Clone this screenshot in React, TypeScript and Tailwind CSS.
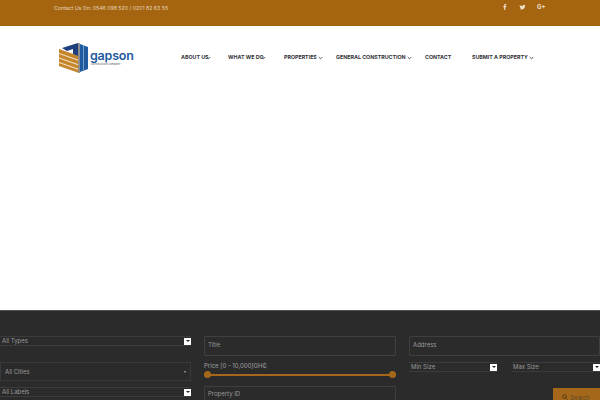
const font = { fontFamily: '"Inter", "Liberation Sans", sans-serif' };

function Nav({ label, caret = "", className = "" }: { label: string; caret?: string; className?: string }) {
  return (
    <div className={`flex items-center text-[5.3px] font-bold text-[#33333a] whitespace-nowrap ${className}`}>
      {label}
      {caret && (
        <svg width="5" height="4" viewBox="0 0 5 4" className={`shrink-0 ${caret}`}>
          <path d="M0.7 1 L2.500 2.800 L4.300 1" fill="none" stroke="#444" strokeWidth="0.9" />
        </svg>
      )}
    </div>
  );
}

function Sel({ label, className = "" }: { label: string; className?: string }) {
  return (
    <div className={`h-[10px] border-y border-[#3c3c3c] flex items-center justify-between text-[6px] leading-[6px] text-[#999] ${className}`}>
      <span className="-mt-[1px]">{label}</span>
      <span className="w-[7px] h-[7px] bg-white flex items-center justify-center">
        <span className="border-x-[2px] border-x-transparent border-t-[2.5px] border-t-[#222]" />
      </span>
    </div>
  );
}

function Field({ label, className = "" }: { label: string; className?: string }) {
  return (
    <div className={`border border-[#3f3f3f] rounded-[1px] flex items-center px-[3px] text-[6px] leading-[6px] text-[#999] ${className}`}>
      <span className="-mt-[2px]">{label}</span>
    </div>
  );
}

export default function App() {
  return (
    <div className="w-[600px] h-[400px] overflow-hidden bg-white flex flex-col" style={font}>
      <div className="h-[26px] bg-[#a5640f] flex justify-between shrink-0">
        <div className="ml-[54px] mt-[4px] text-[5.2px] text-[#e6d6bd] leading-[8px]">Contact Us On: 0546 098 520 / 0201 82 63 55</div>
        <div className="flex mr-[54px] mt-[3px] gap-[11px] text-[#f0e4d0] text-[6px] font-bold leading-[8px]">
          <svg width="6" height="8" viewBox="0 0 6 8">
            <path d="M2.200 7V4.200H1.300V3.100H2.200V2.300C2.200 1.400 2.800 1 3.500 1H4.300V2H3.800C3.400 2 3.300 2.200 3.300 2.500V3.100H4.300L4.100 4.200H3.300V7Z" fill="#f0e4d0" />
          </svg>
          <svg width="7" height="8" viewBox="0 0 8 8">
            <path d="M7.500 2c-.3.1-.5.2-.8.2.3-.2.5-.4.6-.7-.3.2-.6.3-.9.4a1.400 1.400 0 0 0-2.400 1.300C2.800 3.100 1.700 2.600 1 1.700c-.4.700-.2 1.500.4 1.900-.2 0-.4-.1-.6-.2 0 .7.500 1.200 1.100 1.400-.2 0-.4.100-.6 0 .2.600.7 1 1.300 1-.6.500-1.300.700-2.100.6C3.400 7.800 7 6.400 6.800 2.700c.300-.2.500-.4.700-.7z" fill="#f0e4d0" />
          </svg>
          <span className="w-[9px]">G+</span>
        </div>
      </div>
      <div className="h-[84px] shrink-0 flex items-start">
        <div className="ml-[59px] mt-[17px] flex items-center w-[76px]">
          <svg width="30" height="30" viewBox="0 0 30 30" className="shrink-0">
            <path d="M0 6 L20 13 V30 L0 23 Z" fill="#c5852a" />
            <path d="M0 10.500 L20 17.500 M0 15 L20 22 M0 19.500 L20 26.500" stroke="#f3e3c8" strokeWidth="1.100" />
            <path d="M3 5 L19 0 V13 L14 11 V6 L8 8 Z" fill="#1d3f7e" />
            <path d="M19 0 L21 0.300 V30 L19 29.500 Z" fill="#8d8d8d" />
            <path d="M21 1 L29 4 V26 L21 29 Z" fill="#1e5aa0" />
            <path d="M24 2 H25 V27 H24 Z" fill="#ffffff" opacity="0.4" />
          </svg>
          <div className="ml-[1px] flex flex-col -mt-[1px]">
            <span className="text-[12.500px] leading-[11px] pb-[2px] font-semibold text-[#1e5aa0] tracking-[-0.2px]">gapson</span>
            <span className="text-[2.800px] leading-[3px] text-[#555] ml-[1px] whitespace-nowrap">construction company</span>
          </div>
        </div>
        <div className="flex mt-[28px] ml-[46px]">
          <Nav label="ABOUT US" caret="ml-[-3px]" className="w-[47px]" />
          <Nav label="WHAT WE DO" caret="ml-[-3px]" className="w-[56px]" />
          <Nav label="PROPERTIES" caret="ml-[1px]" className="w-[52px]" />
          <Nav label="GENERAL CONSTRUCTION" caret="ml-[1px]" className="w-[89px]" />
          <Nav label="CONTACT" className="w-[47px]" />
          <Nav label="SUBMIT A PROPERTY" caret="ml-[1px]" />
        </div>
      </div>
      <div className="h-[200px] shrink-0 bg-white" />
      <div className="flex-1 bg-[#2b2b2b] border-t border-[#555] relative pt-[25px]">
        <div className="flex">
          <div className="w-[191px] flex flex-col">
            <Sel label="All Types" className="pl-[2px]" />
            <div className="mt-[16px] h-[19px] border border-[#3a3a3a] flex items-center justify-between px-[4px] text-[6px] text-[#999]">
              <span>All Cities</span>
              <span className="border-x-[1px] border-x-transparent border-t-[2px] border-t-[#aaa]" />
            </div>
            <Sel label="All Labels" className="pl-[2px] mt-[6px]" />
          </div>
          <div className="w-[192px] ml-[13px] flex flex-col">
            <Field label="Title" className="h-[20px]" />
            <div className="mt-[5px] text-[6px] leading-[9px] text-[#a0a0a0]">Price [0 - 10,000]GH₵</div>
            <div className="relative h-[7px] mt-[1px] flex items-center">
              <div className="w-full h-[2px] bg-[#a5681a]" />
              <div className="absolute left-0 w-[7px] h-[7px] rounded-full bg-[#a5681a]" />
              <div className="absolute right-0 w-[7px] h-[7px] rounded-full bg-[#a5681a]" />
            </div>
            <Field label="Property ID" className="h-[20px] mt-[8px] items-start pt-[6px]" />
          </div>
          <div className="w-[191px] ml-[13px] flex flex-col">
            <Field label="Address" className="h-[20px]" />
            <div className="flex justify-between mt-[6px]">
              <Sel label="Min Size" className="w-[88px] pl-[2px]" />
              <Sel label="Max Size" className="w-[88px] pl-[1px]" />
            </div>
          </div>
        </div>
        <div className="absolute left-[553px] top-[77px] w-[47px] h-[20px] bg-[#a5681a] flex items-start pt-[6px] pl-[9px] text-[6px] leading-[7px] text-[#5e4a2a]">
          <svg width="6" height="6" viewBox="0 0 6 6" className="mr-[2px]">
            <circle cx="2.500" cy="2.500" r="1.800" fill="none" stroke="#4a3a20" strokeWidth="0.9" />
            <path d="M3.800 3.800 L5.500 5.500" stroke="#4a3a20" strokeWidth="0.9" />
          </svg>
          Search
        </div>
      </div>
    </div>
  );
}
